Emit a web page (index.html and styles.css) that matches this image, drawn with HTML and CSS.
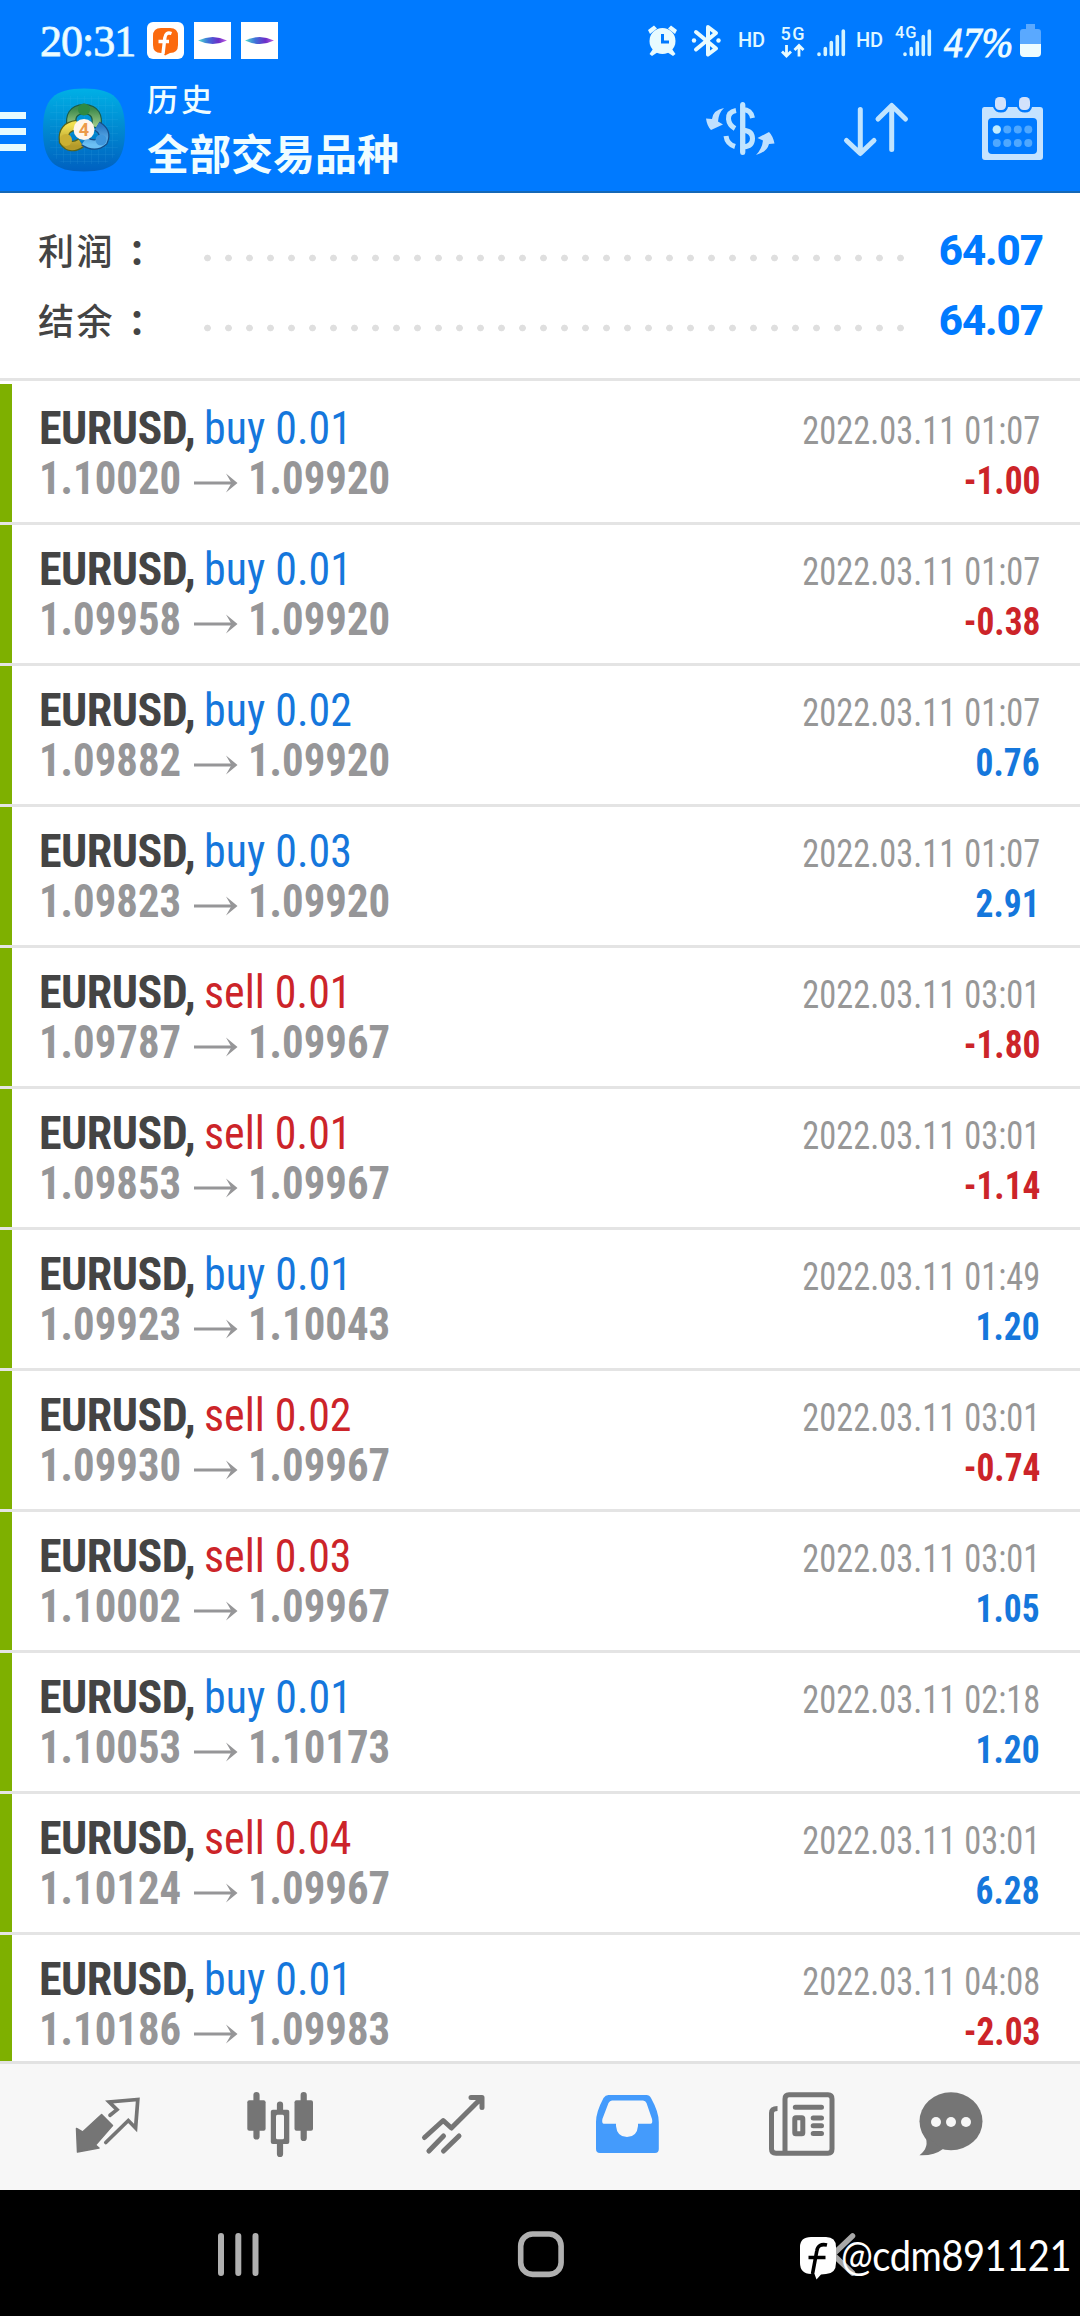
FILE: index.html
```html
<!DOCTYPE html>
<html lang="zh-CN">
<head>
<meta charset="utf-8">
<title>历史</title>
<link rel="stylesheet" href="styles.css">
</head>
<body>
<div class="screen">
  <header class="header">
    <div class="status">
      <span class="clock">20:31</span>
      <svg class="notes" width="131" height="37" viewBox="147 22 131 37">
        <defs><linearGradient id="ray"><stop offset="0" stop-color="#4fe0d0"/><stop offset=".35" stop-color="#3f70d8"/><stop offset=".7" stop-color="#6a2fc8"/><stop offset="1" stop-color="#c05ae0"/></linearGradient></defs>
        <rect x="147" y="22" width="37" height="37" rx="6" fill="#fff"/>
        <path d="M161 28H170Q178 28 178 36V45Q178 53 170 53L165 55.500 L163 53H161Q153 53 153 45V36Q153 28 161 28Z" fill="#fb6a0e"/>
        <path d="M171.500 33.500Q165.500 31.500 164.800 38L163 54M158.500 41.500H169" fill="none" stroke="#fff" stroke-width="3.400"/>
        <path d="M194 22H231V59H194ZM241 22H278V59H241Z" fill="#fff"/>
        <path d="M198 40.500Q213 33.500 227 40.500Q213 47.500 198 40.500Z" fill="url(#ray)"/>
        <path d="M245 40.500Q260 33.500 274 40.500Q260 47.500 245 40.500Z" fill="url(#ray)"/>
      </svg>
      <svg class="system" width="400" height="44" viewBox="644 20 400 44">
        <g fill="#e8fbff" stroke="none">
          <circle cx="662.500" cy="41" r="13"/>
          <path d="M648 30L654 25.500L657 28.500L650 34ZM677 30L671 25.500L668 28.500L675 34Z"/>
          <path d="M653 49L649.500 54L652 56L658 52ZM672 49L675.500 54L673 56L667 52Z"/>
        </g>
        <path d="M662.500 34V42H669" fill="none" stroke="#007aff" stroke-width="3"/>
        <path d="M696 32L716 48.500L708 54.500V27L716 33L696 49.500" fill="none" stroke="#e8fbff" stroke-width="4" stroke-linejoin="round" stroke-linecap="round"/>
        <circle cx="694" cy="40.500" r="2.200" fill="#e8fbff"/><circle cx="718.500" cy="40.500" r="2.200" fill="#e8fbff"/>
        <g class="radio">
          <text x="738" y="47" font-size="20" textLength="27">HD</text>
          <text x="780.500" y="39.500" font-size="18" textLength="24">5G</text>
          <text x="856" y="47" font-size="20" textLength="27">HD</text>
          <text x="895" y="38" font-size="16.500" textLength="21.500">4G</text>
        </g>
        <path d="M786.500 45V56M782 51.500L786.500 56L791 51.500M799 56.500V45.500M794.500 50L799 45.500L803.500 50" fill="none" stroke="#e8fbff" stroke-width="2.800"/>
        <path d="M819 54.500V54M825.300 54.500V48.500M831.300 54.500V42.500M837.300 54.500V36.500M843.300 54.500V31M905 54.500V54M911.300 54.500V48.500M917.300 54.500V42.500M923.300 54.500V36.500M929.300 54.500V31" stroke="#d4f4ff" stroke-width="3.600" stroke-linecap="round"/>
        <text class="charge" x="944" y="56.500" textLength="69" lengthAdjust="spacingAndGlyphs">47%</text>
        <path d="M1026 24H1035V29H1038Q1041 29 1041 32V44H1020V32Q1020 29 1023 29H1026Z" fill="#5aa9ff"/>
        <path d="M1020 44H1041V53Q1041 57 1037 57H1024Q1020 57 1020 53Z" fill="#eefcff"/>
      </svg>
    </div>
    <div class="toolbar">
      <div class="burger"><i></i><i></i><i></i></div>
      <svg class="logo" width="84" height="84" viewBox="42 88 84 84">
        <defs>
          <linearGradient id="bg" x2="0" y2="1"><stop offset="0" stop-color="#00b0e6"/><stop offset=".5" stop-color="#0088d0"/><stop offset="1" stop-color="#0060c0"/></linearGradient>
          <linearGradient id="green" x2="0" y2="1"><stop offset="0" stop-color="#3f8a4c"/><stop offset="1" stop-color="#a4cf8c"/></linearGradient>
          <linearGradient id="gold" x2="0" y2="1"><stop offset="0" stop-color="#f0df52"/><stop offset="1" stop-color="#b39a2a"/></linearGradient>
          <linearGradient id="blue" x2="0" y2="1"><stop offset="0" stop-color="#2b78c4"/><stop offset="1" stop-color="#6cc0f4"/></linearGradient>
          <pattern id="grid" width="7" height="7" patternUnits="userSpaceOnUse"><path d="M0 0H7M0 0V7" stroke="#5cc4ea" stroke-width=".6" opacity=".3"/></pattern>
        </defs>
        <path d="M84 88.500C114 88.500 125 99 125 130C125 161 114 171.500 84 171.500C54 171.500 43 161 43 130C43 99 54 88.500 84 88.500Z" fill="url(#bg)"/>
        <rect x="50" y="96" width="68" height="68" rx="20" fill="url(#grid)"/>
        <g fill="none" stroke-width="8">
          <path d="M72 128Q68 110 84 109Q100 110 96 128" stroke="#1b5c49" stroke-width="10.500"/><path d="M72 127Q68 110 84 109Q100 110 96 127" stroke="url(#green)"/>
          <path d="M77 125Q62 127 64 141Q70 150 81 143" stroke="#55631c" stroke-width="10.500"/><path d="M77 125Q62 127 64 141Q70 150 81 143" stroke="url(#gold)"/>
          <path d="M97 126Q107 132 103 141Q95 148 84 141" stroke="#144e8a" stroke-width="10.500"/><path d="M97 126Q107 132 103 141Q95 148 84 141" stroke="url(#blue)"/>
        </g>
        <circle cx="84" cy="109.500" r="6" fill="#2f8a42"/><circle cx="66" cy="140" r="6" fill="#cbb033"/><circle cx="101" cy="140" r="5.500" fill="#3f96dc"/>
        <circle cx="84" cy="129.500" r="10.500" fill="#fff5ec"/>
        <text x="84" y="136" text-anchor="middle" font-family="Roboto, sans-serif" font-weight="700" font-size="18" fill="#ec9a4a">4</text>
      </svg>
      <div class="titles">
        <div class="sub">历史</div>
        <div class="main">全部交易品种</div>
      </div>
      <svg class="actions" width="340" height="68" viewBox="704 94 340 68">
        <g fill="none" stroke="#c0e4ff" stroke-width="5">
          <path d="M742.700 104.500V152.500M752.500 118Q751 109.500 742.700 109.500M736 110.500Q728 112 728.500 119Q729 125 735 128.500M743 130Q752.500 131 752.500 138.500Q752.500 146.500 743 147M726 136Q727 144 735 146.500" stroke-linecap="butt"/>
          <path d="M742.700 104.500V152.500" stroke-linecap="round"/>
          <path d="M860.300 109.500V153M846.500 140.500L860.300 153.500L874 140.500M891.700 149.500V106M878 119L891.700 105.500L905.500 119" stroke-linecap="round" stroke-linejoin="round"/>
        </g>
        <path d="M724 108Q713 110 712 119L706 118.500Q707 126 711 130L723 124.500L718 121.500Q718.500 113 724 108ZM756 155Q767 152 769 144L774.500 143.500Q773 136 769 132L757.500 138L763 140.500Q762 149 756 155Z" fill="#bfe0ff"/>
        <path d="M984.500 107H993Q995 112.500 1001 112.500Q1007 112.500 1008 107H1017Q1019 112.500 1025 112.500Q1031 112.500 1032 107H1040Q1043 107 1043 110V157Q1043 160 1040 160H985Q982 160 982 157V110Q982 107 984.500 107ZM992 118Q988 118 988 122V150Q988 154 992 154H1033Q1037 154 1037 150V122Q1037 118 1033 118Z" fill="#c5e3ff" fill-rule="evenodd"/>
        <rect x="995" y="97" width="11" height="13" rx="4.500" fill="#d3e2fb"/><rect x="1019" y="97" width="11" height="13" rx="4.500" fill="#d3e2fb"/>
        <g fill="#4fa8ff"><circle cx="1007.300" cy="129.500" r="4"/><circle cx="1017.800" cy="129.500" r="4"/><circle cx="1028.300" cy="129.500" r="4"/><circle cx="996.800" cy="143" r="4"/><circle cx="1007.300" cy="143" r="4"/><circle cx="1017.800" cy="143" r="4"/><circle cx="1028.300" cy="143" r="4"/></g>
        <circle cx="996.800" cy="129.500" r="4.200" fill="#c0ecff"/>
      </svg>
    </div>
  </header>

  <section class="summary">
    <div class="total"><span class="label">利润<span class="colon">：</span></span><span class="dots"></span><b>64.07</b></div>
    <div class="total"><span class="label">结余<span class="colon">：</span></span><span class="dots"></span><b>64.07</b></div>
  </section>

  <svg class="defs" width="0" height="0"><symbol id="arrow" viewBox="0 0 44 22"><path d="M0 11H40" stroke="#969698" stroke-width="3"/><path d="M32 1.500L43.500 11L32 20.500L37.500 11Z" fill="#969698"/></symbol></svg>

  <main class="deals">
    <article class="deal"><div class="line"><b class="sym">EURUSD,</b><span class="side buy">buy 0.01</span><time>2022.03.11 01:07</time></div><div class="line"><span class="price">1.10020</span><svg class="to"><use href="#arrow"/></svg><span class="price">1.09920</span><b class="pl sell">-1.00</b></div></article>
    <article class="deal"><div class="line"><b class="sym">EURUSD,</b><span class="side buy">buy 0.01</span><time>2022.03.11 01:07</time></div><div class="line"><span class="price">1.09958</span><svg class="to"><use href="#arrow"/></svg><span class="price">1.09920</span><b class="pl sell">-0.38</b></div></article>
    <article class="deal"><div class="line"><b class="sym">EURUSD,</b><span class="side buy">buy 0.02</span><time>2022.03.11 01:07</time></div><div class="line"><span class="price">1.09882</span><svg class="to"><use href="#arrow"/></svg><span class="price">1.09920</span><b class="pl buy">0.76</b></div></article>
    <article class="deal"><div class="line"><b class="sym">EURUSD,</b><span class="side buy">buy 0.03</span><time>2022.03.11 01:07</time></div><div class="line"><span class="price">1.09823</span><svg class="to"><use href="#arrow"/></svg><span class="price">1.09920</span><b class="pl buy">2.91</b></div></article>
    <article class="deal"><div class="line"><b class="sym">EURUSD,</b><span class="side sell">sell 0.01</span><time>2022.03.11 03:01</time></div><div class="line"><span class="price">1.09787</span><svg class="to"><use href="#arrow"/></svg><span class="price">1.09967</span><b class="pl sell">-1.80</b></div></article>
    <article class="deal"><div class="line"><b class="sym">EURUSD,</b><span class="side sell">sell 0.01</span><time>2022.03.11 03:01</time></div><div class="line"><span class="price">1.09853</span><svg class="to"><use href="#arrow"/></svg><span class="price">1.09967</span><b class="pl sell">-1.14</b></div></article>
    <article class="deal"><div class="line"><b class="sym">EURUSD,</b><span class="side buy">buy 0.01</span><time>2022.03.11 01:49</time></div><div class="line"><span class="price">1.09923</span><svg class="to"><use href="#arrow"/></svg><span class="price">1.10043</span><b class="pl buy">1.20</b></div></article>
    <article class="deal"><div class="line"><b class="sym">EURUSD,</b><span class="side sell">sell 0.02</span><time>2022.03.11 03:01</time></div><div class="line"><span class="price">1.09930</span><svg class="to"><use href="#arrow"/></svg><span class="price">1.09967</span><b class="pl sell">-0.74</b></div></article>
    <article class="deal"><div class="line"><b class="sym">EURUSD,</b><span class="side sell">sell 0.03</span><time>2022.03.11 03:01</time></div><div class="line"><span class="price">1.10002</span><svg class="to"><use href="#arrow"/></svg><span class="price">1.09967</span><b class="pl buy">1.05</b></div></article>
    <article class="deal"><div class="line"><b class="sym">EURUSD,</b><span class="side buy">buy 0.01</span><time>2022.03.11 02:18</time></div><div class="line"><span class="price">1.10053</span><svg class="to"><use href="#arrow"/></svg><span class="price">1.10173</span><b class="pl buy">1.20</b></div></article>
    <article class="deal"><div class="line"><b class="sym">EURUSD,</b><span class="side sell">sell 0.04</span><time>2022.03.11 03:01</time></div><div class="line"><span class="price">1.10124</span><svg class="to"><use href="#arrow"/></svg><span class="price">1.09967</span><b class="pl buy">6.28</b></div></article>
    <article class="deal"><div class="line"><b class="sym">EURUSD,</b><span class="side buy">buy 0.01</span><time>2022.03.11 04:08</time></div><div class="line"><span class="price">1.10186</span><svg class="to"><use href="#arrow"/></svg><span class="price">1.09983</span><b class="pl sell">-2.03</b></div></article>
  </main>

  <nav class="tabs">
    <svg width="74" height="70" viewBox="70 2090 74 70"><path d="M76.500 2128.500L82.600 2132L101.600 2114.500L112.500 2125.500L95.500 2145L99 2148L77.500 2152Z" fill="#757575" stroke="#757575" stroke-width="1.500" stroke-linejoin="round"/><path d="M110 2115.300L117 2109.700L109.200 2102L137.800 2099.500L135.600 2128L128.300 2120.500L105.800 2142.500" fill="none" stroke="#757575" stroke-width="3.700" stroke-linecap="round"/></svg>
    <svg width="74" height="70" viewBox="243 2090 74 70"><path d="M256.500 2095V2136.500M280 2104.500V2154M303.700 2095V2138" stroke="#757575" stroke-width="6.200" stroke-linecap="round"/><g fill="#757575"><rect x="247.300" y="2100.300" width="18.300" height="30.500" rx="2"/><rect x="270.800" y="2109.700" width="18.500" height="34.300" rx="2"/><rect x="294.500" y="2100.300" width="18.500" height="30.500" rx="2"/></g><rect x="276" y="2114.700" width="8" height="24.600" rx="1.500" fill="#f7f7f7"/></svg>
    <svg width="74" height="70" viewBox="416 2090 74 70"><path d="M424.500 2137.500L443.200 2120.500L451.400 2128L480 2099.500M471 2097.500H482V2107.500M428.900 2151L443.500 2136M443.500 2151L459 2136" fill="none" stroke="#757575" stroke-width="5" stroke-linecap="round" stroke-linejoin="round"/></svg>
    <svg width="74" height="70" viewBox="589 2090 74 70"><path d="M608.500 2095H646.500Q649.500 2095 651 2098Q658.800 2112 658.800 2122V2149Q658.800 2153 655 2153H600Q596 2153 596 2149V2122Q596 2112 603.500 2098Q605.500 2095 608.500 2095ZM612 2100.500Q609.800 2100.500 608.500 2103L602.400 2119Q601.500 2123.800 604 2123.800H616V2126Q617 2137 627 2137Q637 2137 638 2126V2123.800H650.500Q653 2123.800 652 2119L646.500 2103Q645.500 2100.500 643 2100.500Z" fill="#449bfc" fill-rule="evenodd"/></svg>
    <svg width="74" height="70" viewBox="762 2090 74 70"><g fill="none" stroke="#757575" stroke-width="5" stroke-linecap="round"><path d="M777.500 2108.500Q771.500 2108.500 771.500 2113V2149Q771.500 2153.300 776 2153.300H828Q832 2153.300 832 2149V2099Q832 2094.800 828 2094.800H789Q785 2094.800 785 2099V2153" stroke-linecap="butt"/><path d="M795.300 2107.300H821.500M813.200 2118H821.500M813.200 2125.700H821.500M813.200 2133.500H821.500"/><rect x="794.800" y="2117.800" width="8" height="16" rx="1"/></g></svg>
    <svg width="74" height="70" viewBox="914 2090 74 70"><ellipse cx="951" cy="2121.300" rx="31.500" ry="29" fill="#757575"/><path d="M925 2136Q930 2147 919.500 2155.300Q934 2156 943 2149Z" fill="#757575"/><g fill="#f7f7f7"><circle cx="936" cy="2122" r="5"/><circle cx="951" cy="2122" r="5"/><circle cx="966" cy="2122" r="5"/></g></svg>
  </nav>

  <footer class="keys">
    <svg width="50" height="50" viewBox="213 2229 50 50"><path d="M221 2236V2273M238.300 2236V2273M255.500 2236V2273" stroke="#b0b0b0" stroke-width="6" stroke-linecap="round"/></svg>
    <svg width="50" height="50" viewBox="516 2229 50 50"><rect x="520.700" y="2234" width="40.400" height="40.400" rx="12" fill="none" stroke="#b0b0b0" stroke-width="5.600"/></svg>
    <svg width="50" height="50" viewBox="819 2229 50 50"><path d="M852.500 2236L833 2254.500L852.500 2273" fill="none" stroke="#a8a8a8" stroke-width="5.500" stroke-linecap="round"/></svg>
  </footer>
  <div class="mark">
    <svg width="38" height="44" viewBox="799 2236 38 44"><path d="M811 2237H826Q836 2237 836 2247V2263Q836 2273.500 826 2274L821 2274.500L816.500 2279.500L814.500 2274H811Q800 2273.500 800 2263V2247Q800 2237 811 2237Z" fill="#fff"/><path d="M827 2245Q818 2243 816.800 2251L812.500 2274M808.500 2257.500H825.500" fill="none" stroke="#000" stroke-width="3.600"/></svg>
    <span>@cdm891121</span>
  </div>
</div>
</body>
</html>
```
FILE: styles.css
```css
* { box-sizing: border-box; }
body { margin: 0; background: #fff; font-family: Roboto, "Noto Sans CJK SC", sans-serif; }
svg { display: block; flex: none; }
.defs { position: absolute; }
.screen { position: relative; width: 1080px; height: 2316px; overflow: hidden; display: flex; flex-direction: column; }

.header { height: 193px; background: #007aff; border-bottom: 2px solid #1568b6; color: #f0fdff; }
.status { height: 84px; display: flex; align-items: flex-start; padding: 0 36px 0 40px; }
.clock { width: 107px; padding-top: 17px; font: 44px/50px "Liberation Serif", serif; letter-spacing: -1px; -webkit-text-stroke: 0.8px #e0f8ff; }
.notes { margin-top: 22px; }
.system { margin: 20px 0 0 auto; }
.radio { font-family: Roboto, sans-serif; font-weight: 500; fill: #e0f8ff; }
.charge { font: italic 400 43px "Liberation Serif", serif; fill: #eefcff; stroke: #eefcff; stroke-width: 1px; }
.toolbar { height: 107px; display: flex; align-items: flex-start; padding-right: 36px; }
.burger { width: 42px; padding-top: 28px; display: grid; gap: 9px; }
.burger i { width: 26px; height: 7px; background: #e6fbff; }
.logo { margin-top: 4px; }
.titles { margin-left: 21px; }
.sub { font-size: 31px; line-height: 34px; letter-spacing: 3px; font-weight: 500; }
.main { margin-top: 17px; font-size: 42px; line-height: 42px; font-weight: 700; }
.actions { margin: 10px 0 0 auto; }

.summary { height: 188px; padding: 22px 37px 0 38px; border-bottom: 3px solid #e4e4e4; }
.total { height: 70px; display: flex; align-items: center; justify-content: space-between; color: #007aff; }
.label { width: 159px; padding-bottom: 3px; font-size: 36px; letter-spacing: 2.5px; font-weight: 500; color: #444; white-space: nowrap; }
.colon { margin-left: 13px; font-weight: 700; }
.dots { width: 714px; height: 8px; margin: 16px auto 0 0; background: radial-gradient(circle at center, #dfdfdf 3px, transparent 3.7px) 0 0 / 21px 8px; }
.total b { font-size: 42px; font-weight: 800; letter-spacing: -1px; }

.deals { height: 1680px; padding-top: 3px; overflow: hidden; font-stretch: 75%; }
.deal { height: 141px; padding: 17px 40px 0 39px; border-bottom: 3px solid #e4e4e4; background: linear-gradient(#7eb000, #7eb000) 0 0 / 12px 100% no-repeat; }
.line { height: 50px; display: flex; align-items: baseline; line-height: 54px; white-space: nowrap; }
.sym { font-size: 46px; color: #444; width: 165px; letter-spacing: -0.5px; }
.side { font-size: 46px; transform: scaleX(.955); transform-origin: left; }
.buy { color: #1577dc; }
.sell { color: #cc2429; }
time { margin-left: auto; font-size: 38.5px; color: #979797; transform: scaleX(.894); transform-origin: right; }
.price { font-size: 46px; font-weight: 700; color: #969698; width: 155px; transform: scaleX(.93); transform-origin: left; }
.to { width: 44px; height: 22px; margin-right: 10px; }
.pl { margin-left: auto; font-size: 38.5px; transform: scaleX(.92); transform-origin: right; }

.tabs { height: 129px; background: #f7f7f7; border-top: 3px solid #e2e2e2; display: flex; align-items: flex-start; padding: 26px 0 0 70px; gap: 99px; }
.tabs svg:last-child { margin-left: -21px; }
.keys { height: 126px; background: #000; display: flex; justify-content: space-between; padding: 39px 211px 0 213px; }
.mark { position: absolute; left: 799px; top: 2236px; display: flex; color: #fff; }
.mark span { margin-left: 4px; font: 42px/38px Lato, sans-serif; letter-spacing: -0.5px; transform: scaleX(.905); transform-origin: left; }
```
